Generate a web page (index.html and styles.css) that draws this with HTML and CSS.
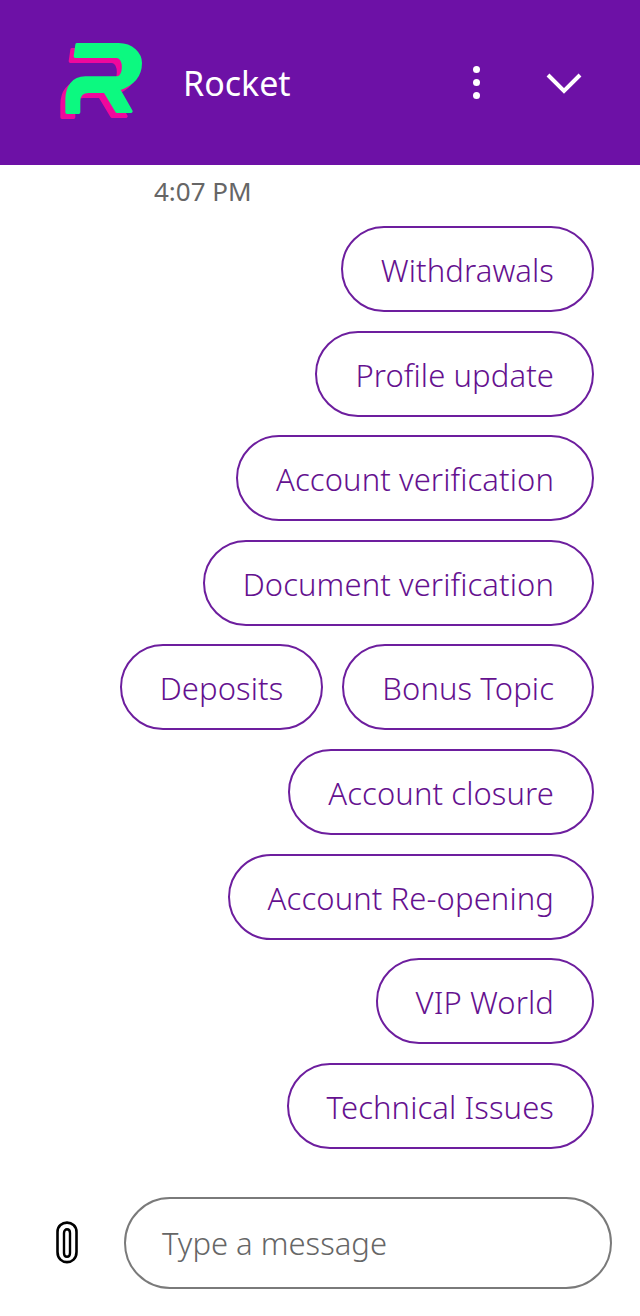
FILE: index.html
```html
<!DOCTYPE html>
<html lang="en">
<head>
    <meta charset="UTF-8">
    <meta name="viewport" content="width=device-width, initial-scale=1.0">
    <title>Rocket</title>
    <link rel="stylesheet" href="styles.css">
</head>

<body>
    <header class="chat-header">
        <svg class="logo" viewBox="50 50 270 270" width="90" height="90">
            <path class="logo-back" transform="translate(-15 15)" d="M110 70 H235 C275 70 300 98 300 125 C300 160 280 188 234 203 L272 270 H230 L194 210 H145 C128 210 115 220 115 240 V273 H80 V235 C80 198 98 170 135 170 H230 C256 170 256 105 230 105 H105 Z"/>
            <path class="logo-front" d="M110 70 H235 C275 70 300 98 300 125 C300 160 280 188 234 203 L272 270 H230 L194 210 H145 C128 210 115 220 115 240 V273 H80 V235 C80 198 98 170 135 170 H230 C256 170 256 105 230 105 H105 Z"/>
        </svg>
        <span class="title">Rocket</span>
        <div class="dots"><i></i><i></i><i></i></div>
        <svg class="chevron" viewBox="0 0 36 22" width="36" height="22">
            <path d="M2 3 L18 19 L34 3" fill="none" stroke="#fff" stroke-width="4"/>
        </svg>
    </header>

    <main class="messages">
        <div class="time">4:07 PM</div>
        <div class="options">
            <div class="row"><button class="pill">Withdrawals</button></div>
            <div class="row"><button class="pill">Profile update</button></div>
            <div class="row"><button class="pill">Account verification</button></div>
            <div class="row"><button class="pill">Document verification</button></div>
            <div class="row">
                <button class="pill">Deposits</button>
                <button class="pill">Bonus Topic</button>
            </div>
            <div class="row"><button class="pill">Account closure</button></div>
            <div class="row"><button class="pill">Account Re-opening</button></div>
            <div class="row"><button class="pill">VIP World</button></div>
            <div class="row"><button class="pill">Technical Issues</button></div>
        </div>
    </main>

    <footer class="composer">
        <svg class="clip" viewBox="0 0 22 43" width="22" height="43">
            <path d="M1.500 11 C1.500 -1.500 20.500 -1.500 20.500 11 V31 C20.500 44.500 1.500 44.500 1.500 31 Z" fill="none" stroke="#000" stroke-width="2.6"/>
            <path d="M8 12 C8 7 14 7 14 12 V32 C14 37 8 37 8 32 Z" fill="none" stroke="#000" stroke-width="2.4"/>
        </svg>
        <div class="input">Type a message</div>
    </footer>
</body>
</html>
```

FILE: styles.css
```css
html, body {
    margin: 0;
    padding: 0;
    background-color: #fff;
}

body {
    font-family: "Noto Sans", "Open Sans", sans-serif;
    height: 1316px;
    overflow: hidden;
}

.chat-header {
    background-color: #6d11a6;
    height: 165px;
    display: flex;
    align-items: center;
    color: #fff;
}

.logo {
    margin-left: 57px;
    flex-shrink: 0;
}

.logo-back {
    fill: #f0089c;
    stroke: #f0089c;
    stroke-width: 10;
    stroke-linejoin: round;
}

.logo-front {
    fill: #0cf980;
    stroke: #0cf980;
    stroke-width: 10;
    stroke-linejoin: round;
}

.title {
    margin-left: 36px;
    font-size: 34px;
    flex: 1;
}

.dots {
    display: flex;
    flex-direction: column;
    gap: 6px;
    margin-right: 66px;
}

.dots i {
    display: block;
    width: 7px;
    height: 7px;
    border-radius: 50%;
    background: #fff;
}

.chevron {
    margin-right: 58px;
}

.time {
    margin: 10px 0 0 154px;
    font-size: 26px;
    line-height: 32px;
    color: #666;
}

.options {
    display: flex;
    flex-direction: column;
    gap: 18.6px;
    margin: 19px 46px 0 0;
}

.row {
    display: flex;
    justify-content: flex-end;
    gap: 19px;
}

.pill {
    height: 86px;
    padding: 2px 38px 0;
    border: 2px solid #6d1e9e;
    border-radius: 43px;
    background: #fff;
    color: #65118f;
    font-family: inherit;
    font-size: 31px;
    font-weight: 300;
    letter-spacing: 0.1px;
}

.composer {
    display: flex;
    align-items: center;
    margin-top: 48px;
}

.clip {
    margin-left: 56px;
}

.input {
    margin-left: 46px;
    width: 488px;
    height: 92px;
    box-sizing: border-box;
    border: 2px solid #7a7a7a;
    border-radius: 46px;
    padding-left: 36px;
    display: flex;
    align-items: center;
    font-size: 31px;
    font-weight: 300;
    color: #666;
}
```
